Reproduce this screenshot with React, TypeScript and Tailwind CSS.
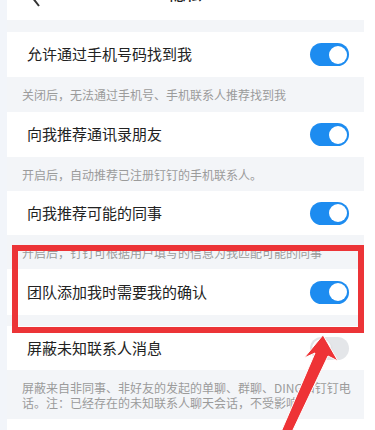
import React from "react";

function Toggle({ on }: { on: boolean }) {
  return on ? (
    <div className="w-[39px] h-[23px] rounded-full bg-[#1d8cf0] p-[2.5px] flex justify-end items-center shrink-0">
      <div className="w-[18px] h-[18px] rounded-full bg-white" />
    </div>
  ) : (
    <div className="w-[39px] h-[23px] rounded-full bg-[#e4e6e9] p-[2px] flex justify-start items-center shrink-0">
      <div className="w-[19px] h-[19px] rounded-full bg-white shadow-sm" />
    </div>
  );
}

function Row({ title, on, h }: { title: string; on: boolean; h: string }) {
  return (
    <div className={`bg-white flex items-center justify-between pl-[20px] pr-[15px] ${h}`}>
      <span className="text-[15px] text-[#222]">{title}</span>
      <Toggle on={on} />
    </div>
  );
}

function Desc({ children, h }: { children: React.ReactNode; h: string }) {
  return (
    <div className={`bg-[#f3f5f8] flex items-center pl-[15px] pr-[10px] text-[12px] leading-[15px] text-[#9b9b9b] ${h}`}>
      <div>{children}</div>
    </div>
  );
}

export default function App() {
  return (
    <div
      className="relative w-[375px] h-[430px] overflow-hidden bg-white flex"
      style={{ fontFamily: '"Noto Sans CJK SC", "Noto Sans", sans-serif' }}
    >
      <div className="w-[7px] bg-[#f2f5fa] shrink-0" />
      <div className="w-[357px] flex flex-col shrink-0">
        <div className="h-[20px] bg-white overflow-hidden relative shrink-0">
          <div className="absolute left-0 right-0 top-[-22px] h-[30px] flex items-center justify-center">
            <span className="text-[16px] text-[#222] font-medium">隐私</span>
          </div>
          <svg className="absolute left-[22px] top-[-13px]" width="14" height="20" viewBox="0 0 14 20">
            <path d="M10 1 L3 10 L10 19" stroke="#333" strokeWidth="2" fill="none" />
          </svg>
        </div>
        <div className="h-[12px] bg-[#f3f5f8] shrink-0" />
        <Row title="允许通过手机号码找到我" on={true} h="h-[45px]" />
        <Desc h="h-[35px]">关闭后，无法通过手机号、手机联系人推荐找到我</Desc>
        <Row title="向我推荐通讯录朋友" on={true} h="h-[45px]" />
        <Desc h="h-[34px]">开启后，自动推荐已注册钉钉的手机联系人。</Desc>
        <Row title="向我推荐可能的同事" on={true} h="h-[44px]" />
        <Desc h="h-[34px]">开启后，钉钉可根据用户填写的信息为我匹配可能的同事</Desc>
        <Row title="团队添加我时需要我的确认" on={true} h="h-[46px]" />
        <div className="h-[11px] bg-[#f3f5f8] shrink-0" />
        <Row title="屏蔽未知联系人消息" on={false} h="h-[44px]" />
        <Desc h="h-[49px]">
          屏蔽来自非同事、非好友的发起的单聊、群聊、DING和钉钉电
          <br />
          话。注：已经存在的未知联系人聊天会话，不受影响。
        </Desc>
        <div className="flex-1 bg-white" />
      </div>
      <div className="flex-1 bg-white" />

      <div className="absolute left-[12px] top-[245px] w-[352px] h-[88px] border-[6px] border-[#ec3437] pointer-events-none" />

      <svg className="absolute left-0 top-0 pointer-events-none" width="375" height="430" viewBox="0 0 375 430">
        <polygon
          points="323,335 338,361 328,356 292,432 281,432 315,353 304,358"
          fill="#ee3336"
          stroke="#ffffff"
          strokeWidth="1"
          strokeLinejoin="round"
        />
      </svg>
    </div>
  );
}
